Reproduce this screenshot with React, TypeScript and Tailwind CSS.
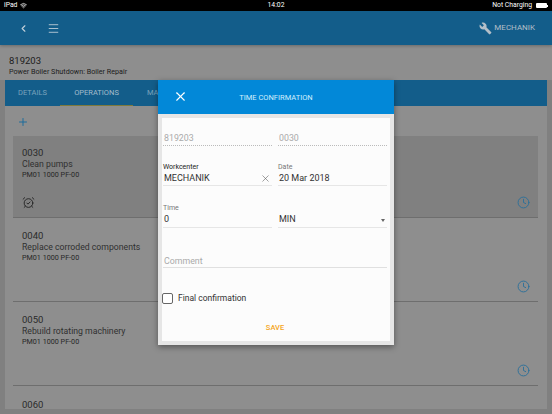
import { X, ChevronLeft, Menu, Plus, AlarmClockCheck, Clock, Wifi } from "lucide-react";

const F = "font-['Roboto','Liberation_Sans',sans-serif]";

function Card({ num, title, active, alarm, h, pt }: { num: string; title: string; active?: boolean; alarm?: boolean; h: string; pt: string }) {
  return (
    <div className={`${h} ${pt} shrink-0 border-b border-[#6e6e6e] pl-[9px] pr-[9px] flex flex-col ${active ? "bg-[#808080]" : "bg-[#8e8e8e]"}`}>
      <div className="text-[9.5px] leading-[13px] text-[#2a2a2a]">{num}</div>
      <div className="text-[8.7px] leading-[11px] text-[#303030]">{title}</div>
      <div className="text-[7.2px] leading-[9px] text-[#262626]">PM01 1000 PF-00</div>
      <div className="mt-auto mb-[8px] flex items-center justify-between h-[14px]">
        {alarm ? <AlarmClockCheck size={13} strokeWidth={1.7} className="text-[#222]" /> : <span />}
        <Clock size={13} strokeWidth={1.7} className="text-[#2a6f9a] -mr-[1px]" />
      </div>
    </div>
  );
}

function Field({ label, value, dark, right, h }: { label: string; value: string; dark?: boolean; right?: React.ReactNode; h: string }) {
  return (
    <div className="flex-1 min-w-0">
      <div className={`text-[7px] leading-[9px] ${dark ? "text-[#222]" : "text-[#777]"}`}>{label}</div>
      <div className={`flex items-center justify-between ${h} border-b border-[#e6e6e6]`}>
        <span className="text-[9px] text-[#333] pl-[1px]">{value}</span>
        {right}
      </div>
    </div>
  );
}

export default function App() {
  return (
    <div className={`relative w-[552px] h-[414px] overflow-hidden bg-[#808080] ${F}`}>
      <div className="h-[11px] bg-black text-white text-[6.8px] flex items-center justify-between pl-[4px] pr-[4px]">
        <div className="flex items-center gap-[3px] w-[100px]">
          <span>iPad</span>
          <Wifi size={7} strokeWidth={2.5} />
        </div>
        <span>14:02</span>
        <div className="flex items-center justify-end gap-[4px] w-[100px]">
          <span>Not Charging</span>
          <div className="flex items-center">
            <div className="w-[11px] h-[5px] bg-white rounded-[1px]" />
            <div className="w-[1px] h-[2px] bg-white" />
          </div>
        </div>
      </div>

      <div className="relative h-[34px] bg-[#135d8a] flex items-center text-[#c2d0da] shadow-[0_1px_3px_rgba(0,0,0,0.25)]">
        <ChevronLeft size={11} strokeWidth={2.5} className="ml-[18px]" />
        <Menu size={13} strokeWidth={1.6} className="ml-[18px]" />
        <div className="ml-auto mr-[17px] flex items-center gap-[2px] text-[#b4bfc8]">
          <svg viewBox="0 0 24 24" width="13" height="13" fill="currentColor">
            <path d="M22.7 19l-9.1-9.1c.9-2.3.4-5-1.5-6.9-2-2-5-2.4-7.4-1.3L9 6 6 9 1.6 4.7C.4 7.1.9 10.1 2.9 12.1c1.9 1.9 4.6 2.4 6.9 1.5l9.1 9.1c.4.4 1 .4 1.4 0l2.3-2.3c.5-.4.5-1.1.1-1.4z" />
          </svg>
          <span className="text-[8px]">MECHANIK</span>
        </div>
      </div>

      <div className="px-[9px] h-[35px] pt-[9px] bg-[#8e8e8e]">
        <div className="text-[9.5px] leading-[13px] text-[#1c1c1c]">819203</div>
        <div className="text-[7.2px] leading-[10px] text-[#1c1c1c]">Power Boiler Shutdown: Boiler Repair</div>
      </div>

      <div className="mx-[5px] h-[26px] bg-[#135d8a] flex text-[7.5px] text-[#7ba4bd]">
        <div className="w-[55px] flex items-center justify-center">DETAILS</div>
        <div className="relative w-[73px] flex items-center justify-center text-[#a3bccb]">
          OPERATIONS
          <div className="absolute left-0 right-0 bottom-0 h-[1px] bg-[#7f7a3c]" />
        </div>
        <div className="ml-[14px] flex items-center">MATERIALS</div>
      </div>

      <div className="mx-[5px] bg-[#8e8e8e] h-[303px] overflow-hidden">
        <div className="h-[30px] pl-[12px] pt-[1px] flex items-center">
          <Plus size={12} strokeWidth={2} className="text-[#1c6d9c]" />
        </div>
        <div className="pl-[8px] pr-[9px] flex flex-col">
          <Card num="0030" title="Clean pumps" active alarm h="h-[82px]" pt="pt-[10px]" />
          <Card num="0040" title="Replace corroded components" h="h-[84px]" pt="pt-[11px]" />
          <Card num="0050" title="Rebuild rotating machinery" h="h-[84px]" pt="pt-[11px]" />
          <div className="pl-[9px] pt-[12px] text-[9.5px] leading-[13px] text-[#2a2a2a] bg-[#8e8e8e] h-[30px]">0060</div>
        </div>
      </div>

      <div className="absolute left-[158px] top-[80px] w-[236px] h-[265px] bg-[#e6e6e6] shadow-[0_2px_6px_rgba(0,0,0,0.4)] flex flex-col">
        <div className="h-[34px] shrink-0 bg-[#0288d8] text-white flex items-center relative">
          <X size={15} strokeWidth={1.8} className="ml-[15px] -mt-[1px]" />
          <span className="absolute inset-x-0 text-center text-[7.5px] top-[13px] leading-[10px] text-[#d4eefc]">TIME CONFIRMATION</span>
        </div>
        <div className="flex-1 m-[4px] bg-[#fcfcfc] pl-[1px] pr-[3px] flex flex-col">
          <div className="flex gap-[6px] pt-[14px]">
            <div className="flex-1 h-[14px] border-b border-dotted border-[#bbb] text-[8.8px] leading-[13px] text-[#aaa] pl-[1px]">819203</div>
            <div className="flex-1 h-[14px] border-b border-dotted border-[#bbb] text-[8.8px] leading-[13px] text-[#aaa] pl-[1px]">0030</div>
          </div>
          <div className="flex gap-[6px] mt-[17px]">
            <Field h="h-[14px]" label="Workcenter" value="MECHANIK" dark right={<X size={11} strokeWidth={1.2} className="text-[#555] mr-[1px]" />} />
            <Field h="h-[14px]" label="Date" value="20 Mar 2018" />
          </div>
          <div className="flex gap-[6px] mt-[18px]">
            <Field h="h-[15px]" label="Time" value="0" />
            <div className="flex-1 pt-[9px]">
              <div className="flex items-center justify-between h-[15px] border-b border-[#e6e6e6]">
                <span className="text-[9px] text-[#333] pl-[1px]">MIN</span>
                <span className="w-0 h-0 border-x-[2.5px] border-x-transparent border-t-[3px] border-t-[#666] mr-[2px]" />
              </div>
            </div>
          </div>
          <div className="mt-[26px] h-[14px] border-b border-[#e0e0e0] text-[8.8px] leading-[14px] text-[#aaa] pl-[1px]">Comment</div>
          <div className="flex items-center gap-[5px] mt-[25px] h-[11px]">
            <div className="w-[11px] h-[11px] border border-[#666] rounded-[2px] bg-white -ml-[1px]" />
            <span className="text-[8.5px] text-[#333]">Final confirmation</span>
          </div>
          <div className="mt-[19px] text-center text-[7.5px] leading-[10px] font-medium text-[#f5a623]">SAVE</div>
        </div>
      </div>
    </div>
  );
}
